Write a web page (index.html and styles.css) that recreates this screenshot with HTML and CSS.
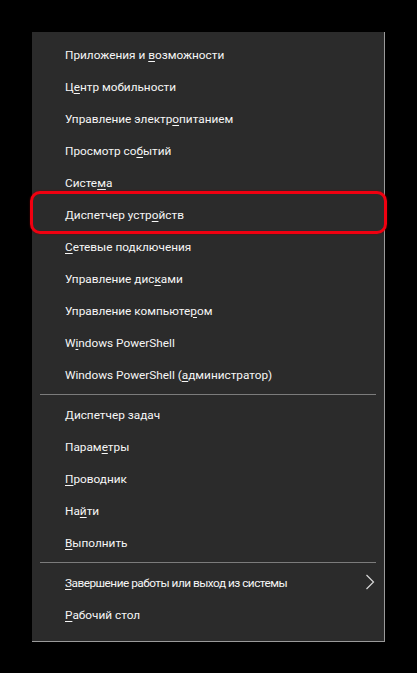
FILE: index.html
```html
<!DOCTYPE html>
<html lang="ru">
<head>
<meta charset="utf-8">
<link rel="stylesheet" href="styles.css">
</head>
<body>
<div class="menu">
  <div class="item"><span>Приложения и <u>в</u>озможности</span></div>
  <div class="item"><span>Ц<u>е</u>нтр мобильности</span></div>
  <div class="item"><span>Управление электр<u>о</u>питанием</span></div>
  <div class="item"><span>Просмотр со<u>б</u>ытий</span></div>
  <div class="item"><span>Систе<u>м</u>а</span></div>
  <div class="item highlighted"><span>Диспетчер устр<u>о</u>йств</span></div>
  <div class="item"><span><u>С</u>етевые подключения</span></div>
  <div class="item"><span>Управление дис<u>к</u>ами</span></div>
  <div class="item"><span>Управление компьюте<u>р</u>ом</span></div>
  <div class="item"><span>W<u>i</u>ndows PowerShell</span></div>
  <div class="item"><span>Windows PowerShell (<u>а</u>дминистратор)</span></div>
  <div class="sep"></div>
  <div class="item"><span><u>Д</u>испетчер задач</span></div>
  <div class="item"><span>Парам<u>е</u>тры</span></div>
  <div class="item"><span><u>П</u>роводник</span></div>
  <div class="item"><span>На<u>й</u>ти</span></div>
  <div class="item"><span><u>В</u>ыполнить</span></div>
  <div class="sep"></div>
  <div class="item has-sub"><span class="tight"><u>З</u>авершение работы или выход из системы</span>
    <svg class="chev" width="10" height="16" viewBox="0 0 10 16"><path d="M1.5 1 L8.5 8 L1.5 15" fill="none" stroke="#d8d8d8" stroke-width="1.2"/></svg>
  </div>
  <div class="item"><span><u>Р</u>абочий стол</span></div>
</div>
</body>
</html>
```

FILE: styles.css
```css
html, body {
  margin: 0;
  padding: 0;
  background: #000;
}
body {
  width: 417px;
  height: 673px;
  overflow: hidden;
  font-family: "Roboto", "Noto Sans", sans-serif;
}
.menu {
  margin: 32px 0 0 32px;
  width: 352px;
  background: #2b2b2b;
  border-right: 1px solid #9a9a9a;
  border-bottom: 1px solid #9a9a9a;
  padding: 6px 0 11px;
  display: flex;
  flex-direction: column;
}
.item {
  position: relative;
  height: 32px;
  display: flex;
  align-items: center;
  padding-left: 33px;
  padding-right: 9px;
  color: #f6f6f6;
  font-size: 11.8px;
  white-space: pre;
}
.item span {
  padding-top: 1px;
}
.item u {
  text-decoration-thickness: 1px;
  text-underline-offset: 2px;
}
.tight {
  letter-spacing: -0.5px;
}
.has-sub {
  justify-content: space-between;
}
.chev {
  display: block;
}
.sep {
  height: 1px;
  background: #7c7c7c;
  margin: 4px 8px 3px;
}
.highlighted::after {
  content: "";
  position: absolute;
  left: -2px;
  right: -3px;
  top: -7px;
  bottom: -4px;
  border: 3.5px solid #f00010;
  border-radius: 10px;
  box-shadow: 0 0 2px rgba(120, 0, 0, 0.8);
  pointer-events: none;
}
```
